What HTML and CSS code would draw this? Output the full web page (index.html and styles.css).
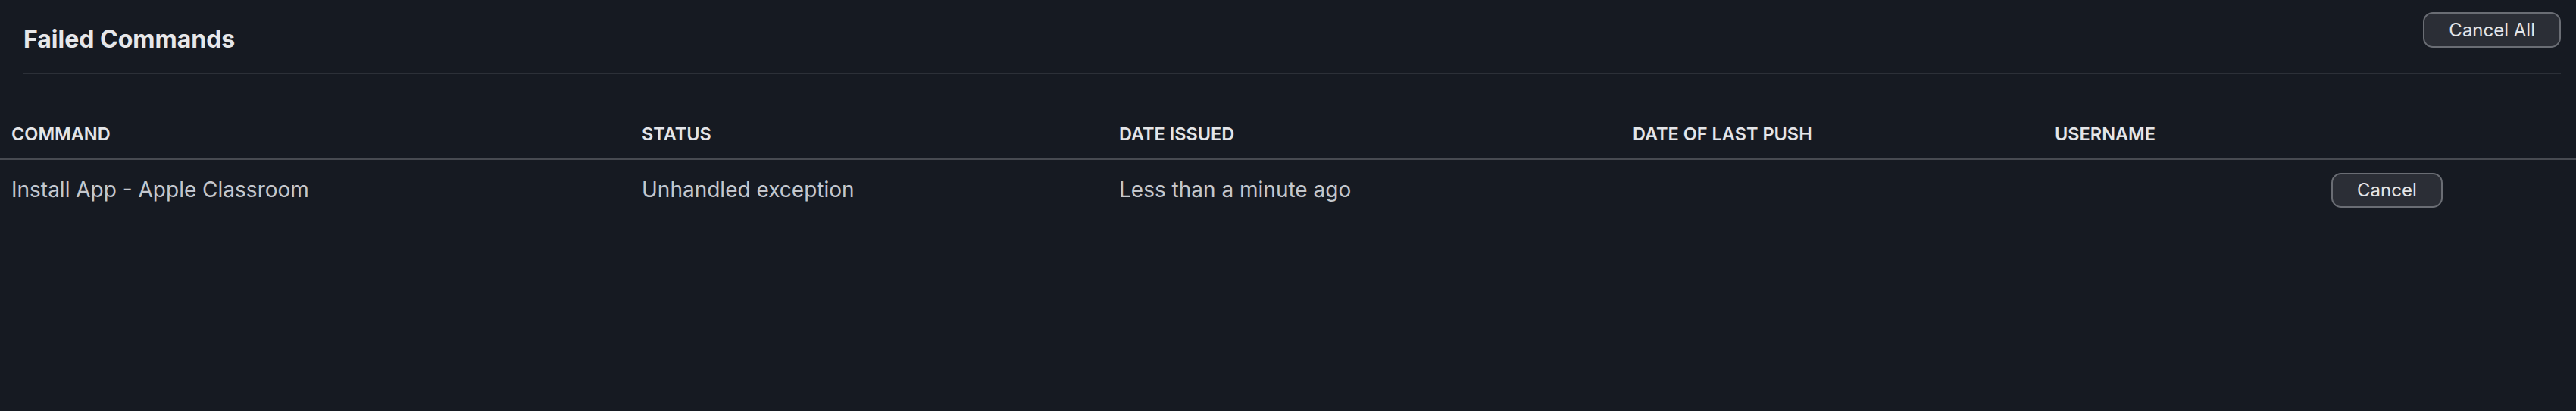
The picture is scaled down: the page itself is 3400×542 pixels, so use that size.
FILE: index.html
```html
<!DOCTYPE html>
<html lang="en">
<head>
    <meta charset="UTF-8">
    <meta name="viewport" content="width=device-width, initial-scale=1.0">
    <title>Failed Commands</title>
    <link rel="stylesheet" href="styles.css">
</head>
<body>
    <section class="panel">
        <div class="panel-head">
            <h2>Failed Commands</h2>
            <button class="btn" type="button">Cancel All</button>
        </div>
        <table class="commands">
            <colgroup>
                <col class="col-command">
                <col class="col-status">
                <col class="col-issued">
                <col class="col-push">
                <col class="col-user">
                <col class="col-action">
            </colgroup>
            <thead>
                <tr>
                    <th>Command</th>
                    <th>Status</th>
                    <th>Date Issued</th>
                    <th>Date of Last Push</th>
                    <th>Username</th>
                    <th></th>
                </tr>
            </thead>
            <tbody>
                <tr>
                    <td>Install App - Apple Classroom</td>
                    <td>Unhandled exception</td>
                    <td>Less than a minute ago</td>
                    <td></td>
                    <td></td>
                    <td><button class="btn btn-row" type="button">Cancel</button></td>
                </tr>
            </tbody>
        </table>
    </section>
</body>
</html>
```

FILE: styles.css
```css
body {
    margin: 0;
    padding: 0;
    background-color: #161a22;
    font-family: Inter, "Noto Sans", sans-serif;
    color: #e4e5e8;
}
.panel-head {
    display: flex;
    justify-content: space-between;
    align-items: flex-start;
    margin: 0 20px 0 31px;
    padding-top: 16px;
    padding-bottom: 24px;
    border-bottom: 2px solid #2c3038;
}
.panel-head h2 {
    margin: 16px 0 0;
    font-size: 32px;
    line-height: 40px;
    font-weight: 700;
    color: #e6e7ea;
}
.btn {
    height: 47px;
    padding: 0 32px;
    font-family: Inter, "Noto Sans", sans-serif;
    font-size: 24px;
    font-weight: 400;
    color: #e4e5e8;
    background-color: #2b2e36;
    border: 2px solid #6a6d74;
    border-radius: 13px;
    cursor: pointer;
}
.btn-row {
    height: 46px;
}
.commands {
    width: 100%;
    margin-top: 45px;
    border-collapse: collapse;
    table-layout: fixed;
}
.col-command { width: 832px; }
.col-status { width: 630px; }
.col-issued { width: 678px; }
.col-push { width: 557px; }
.col-user { width: 365px; }
.commands th {
    padding: 20px 15px 18px;
    font-size: 23.5px;
    line-height: 28px;
    font-weight: 600;
    text-align: left;
    text-transform: uppercase;
    color: #e4e5e8;
    border-bottom: 2px solid #474a51;
}
.commands td {
    padding: 15px 15px 19px;
    font-size: 28px;
    line-height: 46px;
    font-weight: 400;
    color: #c4c7cd;
    vertical-align: middle;
}
```
